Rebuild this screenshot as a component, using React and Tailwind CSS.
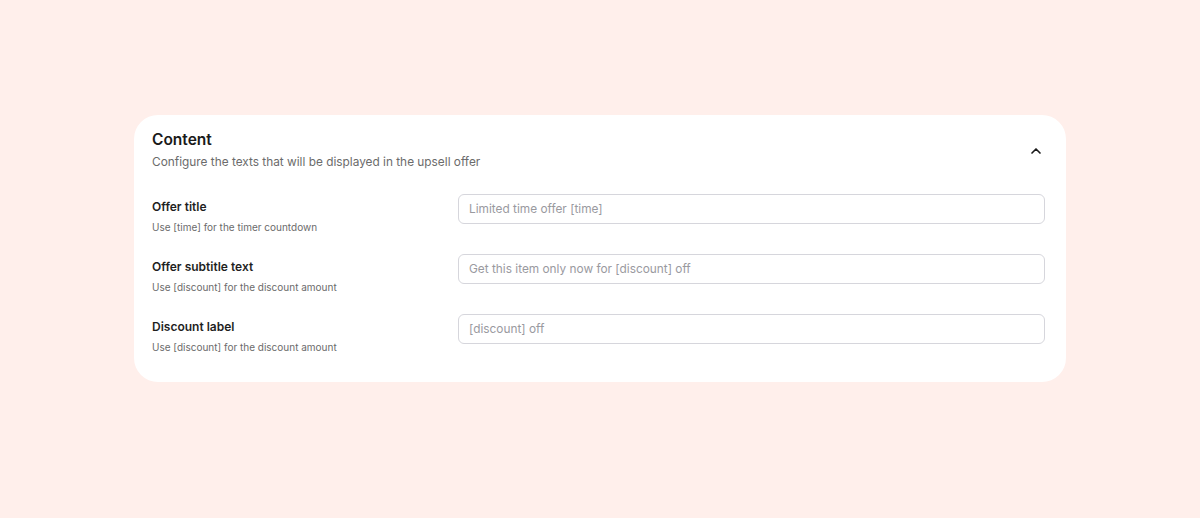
import { ChevronUp } from "lucide-react";

const rows = [
  {
    label: "Offer title",
    help: "Use [time] for the timer countdown",
    placeholder: "Limited time offer [time]",
  },
  {
    label: "Offer subtitle text",
    help: "Use [discount] for the discount amount",
    placeholder: "Get this item only now for [discount] off",
  },
  {
    label: "Discount label",
    help: "Use [discount] for the discount amount",
    placeholder: "[discount] off",
  },
];

export default function App() {
  return (
    <div
      className="min-h-[518px] w-full bg-[#ffefeb] pt-[115px]"
      style={{ fontFamily: "Inter, 'Noto Sans', sans-serif" }}
    >
      <div className="mx-auto w-[932px] rounded-[24px] bg-white pl-[18px] pr-[21px] pt-[13px] pb-[28px]">
        <div className="flex items-center justify-between">
          <div>
            <h2 className="text-[15.5px] leading-[24px] font-semibold text-[#1a1a1a]">Content</h2>
            <p className="mt-[1px] text-[11.85px] leading-[18px] text-[#6b6b6b]">
              Configure the texts that will be displayed in the upsell offer
            </p>
          </div>
          <button className="mr-[1px] mt-[2px] text-[#1a1a1a]">
            <ChevronUp size={16} strokeWidth={2.5} />
          </button>
        </div>
        <div className="mt-[23px] flex flex-col gap-[20px]">
          {rows.map((r) => (
            <div key={r.label} className="flex items-start">
              <div className="w-[306px] shrink-0 pt-[5px]">
                <div className="text-[12px] leading-[16px] font-semibold text-[#1f1f1f]">{r.label}</div>
                <div className="mt-[5px] text-[10px] leading-[14px] text-[#6b6b6b]">{r.help}</div>
              </div>
              <input
                className="h-[30px] flex-1 rounded-[6px] border border-[#d6d6dc] px-[10px] text-[11.85px] text-[#1f1f1f] placeholder:text-[#9a9a9f] outline-none"
                placeholder={r.placeholder}
              />
            </div>
          ))}
        </div>
      </div>
    </div>
  );
}
